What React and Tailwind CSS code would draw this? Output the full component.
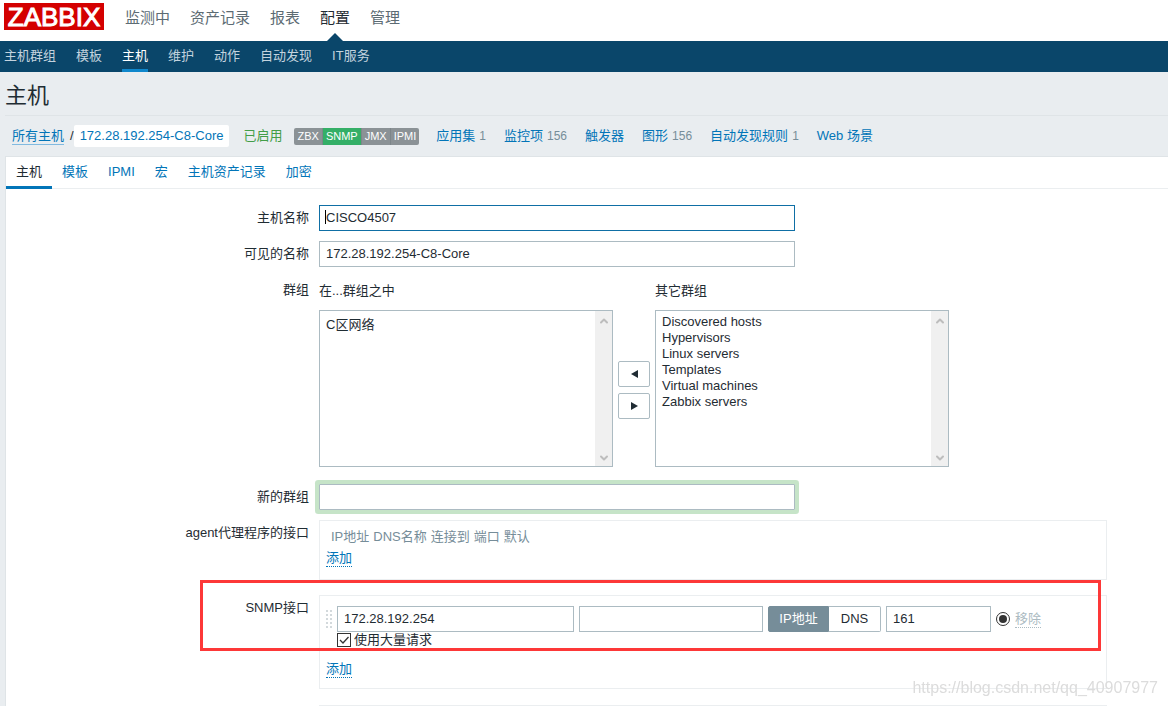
import { useState } from 'react';
import { ChevronUp, ChevronDown } from 'lucide-react';

const mainMenu = ['监测中', '资产记录', '报表', '配置', '管理'];
const subMenu = ['主机群组', '模板', '主机', '维护', '动作', '自动发现', 'IT服务'];
const tabs = ['主机', '模板', 'IPMI', '宏', '主机资产记录', '加密'];
const otherGroups = [
  'Discovered hosts',
  'Hypervisors',
  'Linux servers',
  'Templates',
  'Virtual machines',
  'Zabbix servers',
];
const hostLinks = [
  { name: '应用集', count: 1 },
  { name: '监控项', count: 156 },
  { name: '触发器' },
  { name: '图形', count: 156 },
  { name: '自动发现规则', count: 1 },
  { name: 'Web 场景' },
];
const agents = [
  { name: 'ZBX', on: false },
  { name: 'SNMP', on: true },
  { name: 'JMX', on: false },
  { name: 'IPMI', on: false },
];

const inputClass = 'h-[26px] border border-[#acbbc2] bg-white px-1.5 text-[#1f2c33] outline-none';

function Row({ label, htmlFor, className = '', children }) {
  return (
    <div className={`flex gap-2.5 ${className}`}>
      <label htmlFor={htmlFor} className="w-[303px] shrink-0 text-right leading-[25px]">{label}</label>
      <div className="min-w-0 flex-1">{children}</div>
    </div>
  );
}

function ListBox({ id, label, options }) {
  return (
    <div className="w-[294px]">
      <label htmlFor={id} className="block h-[33px] leading-7">{label}</label>
      <div className="flex h-[157px] border border-[#acbbc2]">
        <select id={id} multiple className="min-w-0 flex-1 appearance-none overflow-hidden px-1.5 py-[3px] outline-none">
          {options.map((o) => (
            <option key={o} className="h-4 min-h-0 p-0 leading-4">{o}</option>
          ))}
        </select>
        <div className="flex w-[17px] flex-col items-center justify-between bg-[#f0f0f0] pt-1 pb-0.5 text-[#bdbdbd]">
          <ChevronUp size={12} strokeWidth={4} />
          <ChevronDown size={12} strokeWidth={4} />
        </div>
      </div>
    </div>
  );
}

function AddLink() {
  return (
    <a href="#add" className="inline-block border-b border-dotted border-[#0275b8] leading-[17px] text-[#0275b8]">添加</a>
  );
}

function DragHandle() {
  return (
    <div className="grid grid-cols-2 gap-x-[2px] gap-y-[2px]">
      {Array.from({ length: 10 }).map((_, i) => (
        <span key={i} className="h-[2px] w-[2px] bg-[#d3d9dc]"></span>
      ))}
    </div>
  );
}

export default function App() {
  const [hostName, setHostName] = useState('CISCO4507');
  const [visibleName, setVisibleName] = useState('172.28.192.254-C8-Core');
  const [newGroup, setNewGroup] = useState('');
  const [iface, setIface] = useState({ ip: '172.28.192.254', dns: '', port: '161', bulk: true });
  const [connect, setConnect] = useState('ip');

  return (
    <div className="flex h-screen flex-col overflow-hidden bg-[#e9edf0] font-['Liberation_Sans','Noto_Sans_CJK_SC',sans-serif] text-[13px] text-[#1f2c33]">
      <header className="flex h-[41px] shrink-0 bg-white pl-1">
        <a href="#home" className="mt-[3px] mr-[21px] flex h-[27px] w-[100px] items-center justify-center bg-[#d40000] text-[26px] leading-none text-white [-webkit-text-stroke:1px_white]">ZABBIX</a>
        <nav className="flex gap-5 text-[15px] leading-[35px] text-[#5c6b73]">
          {mainMenu.map((item) => (
            <a key={item} href="#menu" className={`relative ${item === '配置' ? 'text-[#1f2c33]' : ''}`}>
              {item}
              {item === '配置' && (
                <svg className="absolute bottom-0 left-1/2 -translate-x-1/2" width="16" height="8" viewBox="0 0 16 8">
                  <path d="M0 8 L8 0 L16 8 Z" fill="#0a466a" />
                </svg>
              )}
            </a>
          ))}
        </nav>
      </header>

      <nav className="flex h-[31px] shrink-0 gap-5 bg-[#0a466a] pl-1 leading-[29px] text-[#c3d3de]">
        {subMenu.map((item) => (
          <a key={item} href="#sub" className={item === '主机' ? 'border-b-3 border-[#0f87cc] text-white' : ''}>{item}</a>
        ))}
      </nav>

      <h1 className="ml-[5px] h-11 shrink-0 border-b border-[#dfe4e7] text-[22px] leading-[48px]">主机</h1>

      <div className="ml-3 flex h-10 shrink-0 items-center text-[#0275b8]">
        <a href="#hosts" className="border-b border-[#81bae0] leading-[17px]">所有主机</a>
        <span className="ml-1.5 text-[#1f2c33]">/</span>
        <a href="#host" className="rounded-xs bg-white px-1.5 leading-[22px]">172.28.192.254-C8-Core</a>
        <span className="ml-3.5 text-[#429e47]">已启用</span>
        <div className="ml-3 flex overflow-hidden rounded-xs text-[11px] leading-[17px] text-white">
          {agents.map((a) => (
            <span key={a.name} className={`border-r border-[#7d868a] px-[3px] last:border-r-0 ${a.on ? 'bg-[#34af67]' : 'bg-[#8b9296]'}`}>{a.name}</span>
          ))}
        </div>
        <ul className="ml-[17px] flex gap-[18px]">
          {hostLinks.map((l) => (
            <li key={l.name} className="flex items-center gap-1">
              <a href="#link">{l.name}</a>
              {l.count && <span className="text-[12px] text-[#768d99]">{l.count}</span>}
            </li>
          ))}
        </ul>
      </div>

      <main className="ml-[5px] flex-1 border-t border-l border-[#dfe4e7] bg-white">
        <div className="flex h-8 border-b border-[#ebeef0] text-[#0275b8]">
          {tabs.map((t) => (
            <button key={t} type="button" className={`px-2.5 leading-[30px] ${t === '主机' ? 'h-8 border-b-3 border-[#0275b8] text-[#1f2c33]' : 'h-[30px]'}`}>{t}</button>
          ))}
        </div>

        <form className="pt-4">
          <Row label="主机名称" htmlFor="host">
            <div className="relative">
              <input id="host" className="h-[26px] w-[476px] border border-[#0f6fa5] bg-white px-1.5 pb-0.5 outline-none" value={hostName} onChange={(e) => setHostName(e.target.value)} />
              <span className="absolute top-[5px] left-1.5 h-3.5 w-px bg-black"></span>
            </div>
          </Row>
          <Row label="可见的名称" htmlFor="visible" className="mt-2.5">
            <input id="visible" className={`${inputClass} block w-[476px] pb-0.5`} value={visibleName} onChange={(e) => setVisibleName(e.target.value)} />
          </Row>
          <Row label="群组" htmlFor="in-groups" className="mt-2.5">
            <div className="flex">
              <ListBox id="in-groups" label="在...群组之中" options={['C区网络']} />
              <div className="mx-[5px] mt-[84px] flex flex-col gap-1.5">
                <button type="button" aria-label="添加到群组" className="flex h-[26px] w-8 items-center justify-center rounded-xs border border-[#acbbc2] bg-white">
                  <svg width="7" height="8" viewBox="0 0 7 8"><path d="M7 0 L0 4 L7 8 Z" fill="#1f2c33" /></svg>
                </button>
                <button type="button" aria-label="从群组移除" className="flex h-[26px] w-8 items-center justify-center rounded-xs border border-[#acbbc2] bg-white">
                  <svg width="7" height="8" viewBox="0 0 7 8"><path d="M0 0 L7 4 L0 8 Z" fill="#1f2c33" /></svg>
                </button>
              </div>
              <ListBox id="other-groups" label="其它群组" options={otherGroups} />
            </div>
          </Row>
          <Row label="新的群组" htmlFor="new-group" className="mt-[17px]">
            <input id="new-group" className={`${inputClass} block w-[476px] rounded-[1px] ring-4 ring-[#c6e4c8]`} value={newGroup} onChange={(e) => setNewGroup(e.target.value)} />
          </Row>

          <Row label="agent代理程序的接口" className="mt-2.5">
            <div className="h-[60px] w-full max-w-[788px] border border-[#ebeef0] px-1.5 pt-1">
              <table className="ml-[5px] leading-[23px] text-[#768d99]">
                <thead>
                  <tr>
                    {['IP地址', 'DNS名称', '连接到', '端口', '默认'].map((h) => (
                      <th key={h} className="pr-1 text-left font-normal">{h}</th>
                    ))}
                  </tr>
                </thead>
              </table>
              <AddLink />
            </div>
          </Row>

          <div className="relative mt-[15px] max-w-[1101px]">
            <Row label="SNMP接口" htmlFor="snmp-ip">
              <div className="h-[94px] border border-[#ebeef0] px-1.5 pt-2.5">
                <div className="flex items-center">
                  <DragHandle />
                  <div className="ml-[5px] flex items-center gap-[5px]">
                    <input id="snmp-ip" className={`${inputClass} w-[237px] pb-0.5`} value={iface.ip} onChange={(e) => setIface({ ...iface, ip: e.target.value })} />
                    <input aria-label="DNS名称" className={`${inputClass} w-[184px] pb-0.5`} value={iface.dns} onChange={(e) => setIface({ ...iface, dns: e.target.value })} />
                    <div className="flex h-[26px] text-center leading-6">
                      <input id="c-ip" type="radio" name="connect" className="peer/ip sr-only" checked={connect === 'ip'} onChange={() => setConnect('ip')} />
                      <label htmlFor="c-ip" className="w-[61px] rounded-l-xs border border-[#acbbc2] peer-checked/ip:border-[#768d99] peer-checked/ip:bg-[#768d99] peer-checked/ip:text-white">IP地址</label>
                      <input id="c-dns" type="radio" name="connect" className="peer/dns sr-only" checked={connect === 'dns'} onChange={() => setConnect('dns')} />
                      <label htmlFor="c-dns" className="w-[52px] rounded-r-xs border border-l-0 border-[#acbbc2] peer-checked/dns:bg-[#768d99] peer-checked/dns:text-white">DNS</label>
                    </div>
                    <input aria-label="端口" className={`${inputClass} w-[105px] pb-0.5`} value={iface.port} onChange={(e) => setIface({ ...iface, port: e.target.value })} />
                    <input type="radio" name="default" aria-label="默认" defaultChecked className="flex h-3.5 w-3.5 appearance-none items-center justify-center rounded-full border border-[#333] before:h-2 before:w-2 before:rounded-full checked:before:bg-[#333]" />
                    <button type="button" className="border-b border-dotted border-[#acbbc2] leading-[17px] text-[#acbbc2]">移除</button>
                  </div>
                </div>
                <div className="ml-[11px] flex items-center gap-[3px]">
                  <div className="relative h-3.5 w-3.5">
                    <input id="bulk" type="checkbox" checked={iface.bulk} onChange={(e) => setIface({ ...iface, bulk: e.target.checked })} className="peer block h-3.5 w-3.5 appearance-none border border-[#333]" />
                    <svg className="pointer-events-none invisible absolute inset-0 peer-checked:visible" width="14" height="14" viewBox="0 0 14 14">
                      <path d="M3 7 L6 10 L11.500 4" fill="none" stroke="#333" strokeWidth="1.300" />
                    </svg>
                  </div>
                  <label htmlFor="bulk" className="leading-4">使用大量请求</label>
                </div>
                <div className="mt-[11px]">
                  <AddLink />
                </div>
              </div>
            </Row>
            {/* highlight frame */}
            <div className="pointer-events-none absolute -top-[15px] right-1.5 left-[194px] h-[71px] border-3 border-[#fd3838]"></div>
          </div>

          <Row className="mt-4">
            <div className="h-4 w-full max-w-[788px] border border-[#ebeef0]"></div>
          </Row>
        </form>
      </main>

      <span className="pointer-events-none fixed right-2.5 bottom-2 text-[16px] leading-5 text-[#dcdcdc]">https://blog.csdn.net/qq_40907977</span>
    </div>
  );
}
